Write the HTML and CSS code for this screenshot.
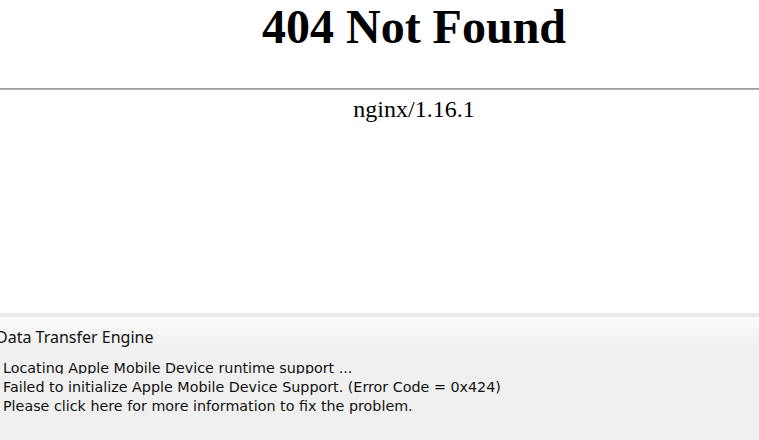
FILE: index.html
```html
<!DOCTYPE html>
<html>
<head>
<meta charset="utf-8">
<title>404 Not Found</title>
<link rel="stylesheet" href="styles.css">
</head>
<body>
<div class="page">
  <div class="page-head"><h1 class="title">404 Not Found</h1></div>
  <hr class="rule">
  <div class="page-foot"><p class="server">nginx/1.16.1</p></div>
</div>
<div class="panel">
  <div class="panel-title">Data Transfer Engine</div>
  <div class="panel-body">
    <div class="msg msg-clipped">Locating Apple Mobile Device runtime support ...</div>
    <div class="msg">Failed to initialize Apple Mobile Device Support. (Error Code = 0x424)</div>
    <div class="msg">Please click here for more information to fix the problem.</div>
  </div>
</div>
</body>
</html>
```
FILE: styles.css
```css
html, body {
  margin: 0;
  padding: 0;
  width: 759px;
  height: 440px;
  overflow: hidden;
  background: #ffffff;
}
.page {
  height: 313px;
  font-family: "Liberation Serif", "Times New Roman", serif;
  color: #000;
}
.page-head, .page-foot {
  padding-left: 69px;
  text-align: center;
}
.title {
  margin: 0;
  font-size: 48px;
  line-height: 53px;
  font-weight: bold;
}
.rule {
  margin: 35px 0 0 0;
  border: none;
  border-top: 1px solid #9c9c9c;
  border-bottom: 1px solid #b4b4b4;
  height: 0;
}
.server {
  margin: 6px 0 0 0;
  font-size: 24px;
  line-height: 27px;
}
.panel {
  height: 127px;
  box-sizing: border-box;
  border-top: 4px solid #e9e9e9;
  background: linear-gradient(#fafafa 0px, #f0f0f0 34px, #f0f0f0 100%);
  color: #111111;
}
.panel-title {
  margin-left: -4px;
  padding-top: 9px;
  font-family: "Noto Sans", "Segoe UI", sans-serif;
  font-size: 16px;
  line-height: 22px;
}
.panel-body {
  padding-top: 11px;
  padding-left: 3px;
  font-family: "DejaVu Sans", Tahoma, sans-serif;
  font-size: 14.3px;
  line-height: 19px;
}
.msg {
  white-space: nowrap;
}
.msg-clipped {
  height: 15px;
  overflow: hidden;
  margin-bottom: 4px;
}
```
